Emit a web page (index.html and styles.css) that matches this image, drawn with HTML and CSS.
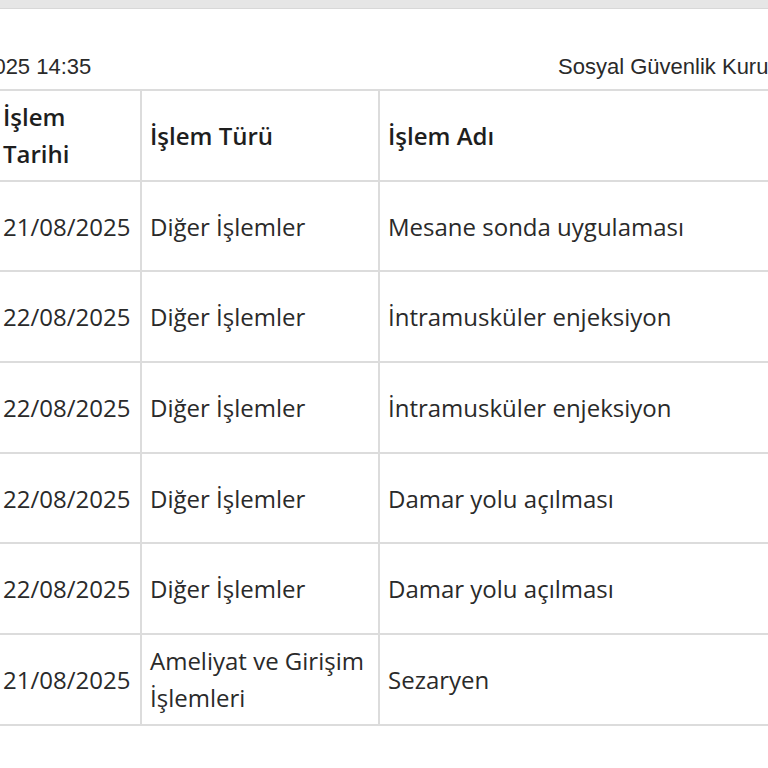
FILE: index.html
```html
<!DOCTYPE html>
<html lang="tr">
<head>
<meta charset="utf-8">
<title>İşlem Listesi</title>
<link rel="stylesheet" href="styles.css">
</head>
<body>
<div class="topbar"></div>
<div class="meta">
  <span class="meta-date">22/08/2025 14:35</span>
  <span class="meta-org">Sosyal Güvenlik Kurumu</span>
</div>
<table class="records">
  <thead>
    <tr>
      <th class="c-date">İşlem<br>Tarihi</th>
      <th class="c-type">İşlem Türü</th>
      <th class="c-name">İşlem Adı</th>
    </tr>
  </thead>
  <tbody>
    <tr><td class="c-date">21/08/2025</td><td class="c-type">Diğer İşlemler</td><td class="c-name">Mesane sonda uygulaması</td></tr>
    <tr><td class="c-date">22/08/2025</td><td class="c-type">Diğer İşlemler</td><td class="c-name">İntramusküler enjeksiyon</td></tr>
    <tr><td class="c-date">22/08/2025</td><td class="c-type">Diğer İşlemler</td><td class="c-name">İntramusküler enjeksiyon</td></tr>
    <tr><td class="c-date">22/08/2025</td><td class="c-type">Diğer İşlemler</td><td class="c-name">Damar yolu açılması</td></tr>
    <tr><td class="c-date">22/08/2025</td><td class="c-type">Diğer İşlemler</td><td class="c-name">Damar yolu açılması</td></tr>
    <tr><td class="c-date">21/08/2025</td><td class="c-type">Ameliyat ve Girişim<br>İşlemleri</td><td class="c-name">Sezaryen</td></tr>
  </tbody>
</table>
</body>
</html>
```
FILE: styles.css
```css
html, body {
  margin: 0;
  padding: 0;
  background: #fff;
  overflow: hidden;
}

body {
  width: 768px;
  height: 768px;
  font-family: "Open Sans", "DejaVu Sans", sans-serif;
  color: #222;
}

.topbar {
  height: 8px;
  background: #e6e6e6;
  border-bottom: 1px solid #d8d8d8;
}

.meta {
  display: flex;
  justify-content: space-between;
  align-items: flex-end;
  height: 80px;
  padding-bottom: 9px;
  box-sizing: border-box;
  margin: 0 -31px 0 -80px;
  font-family: "Liberation Sans", Arial, sans-serif;
  font-size: 22px;
  line-height: 26px;
  color: #2a2a2a;
}

.records {
  border-collapse: collapse;
  width: 775px;
  margin-left: -5px;
  font-size: 24px;
  line-height: 37px;
}

.records th,
.records td {
  border-top: 2px solid #dcdcdc;
  border-bottom: 2px solid #dcdcdc;
  padding: 0 8px;
  height: 90.7px;
  box-sizing: border-box;
  text-align: left;
  vertical-align: middle;
  white-space: nowrap;
}

.records th {
  font-weight: 600;
  color: #1e1e1e;
}

.records td {
  font-weight: 400;
  color: #2a2a2a;
}

.c-date {
  width: 146px;
  border-right: 2px solid #dcdcdc;
}

.c-type {
  width: 238px;
  border-right: 2px solid #dcdcdc;
}
```
